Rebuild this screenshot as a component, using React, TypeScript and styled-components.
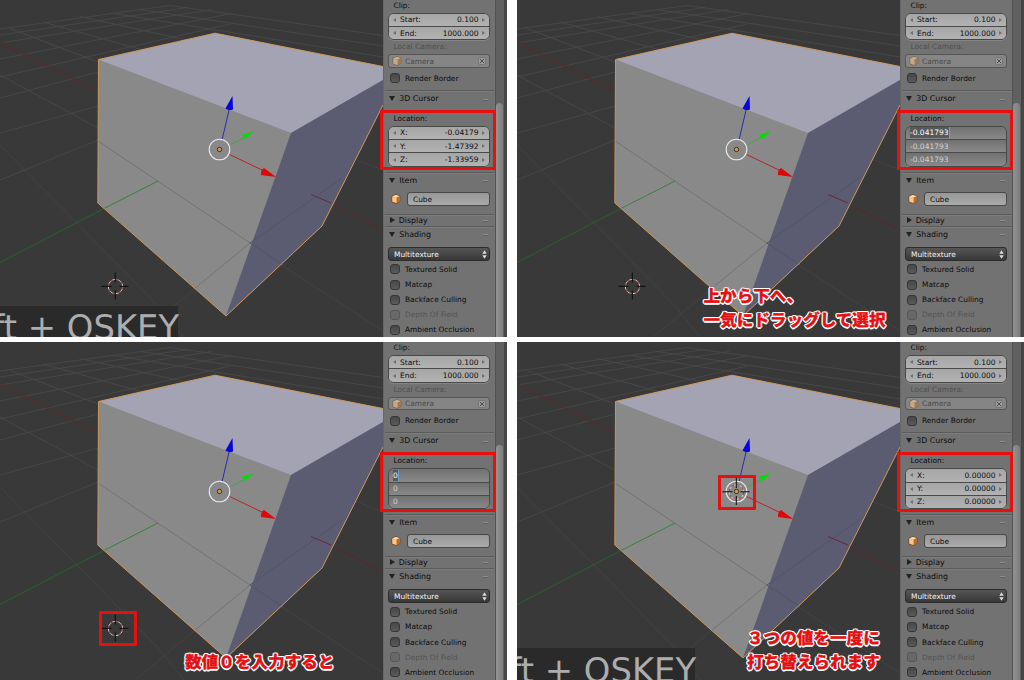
import React from "react";
import styled, { createGlobalStyle, css } from "styled-components";

const GlobalStyle = createGlobalStyle`
  * { box-sizing: border-box; }
  body { margin: 0; background: #fff; overflow: hidden; }
`;

const Sheet = styled.main`
  display: grid;
  grid-template-columns: 507px 507px;
  grid-template-rows: 337.4px 337.6px;
  gap: 5px 10px;
  width: 1024px;
  height: 680px;
  background: #fdfdfd;
  font-family: "DejaVu Sans", "Noto Sans CJK JP", sans-serif;
  text-rendering: geometricPrecision;
  color: #0c0c0c;
`;

const Panel = styled.section`
  position: relative;
  display: flex;
  overflow: hidden;
  background: #393939;
`;

const Scene = styled.svg`
  flex: none;
  width: 383px;
  height: 338px;
  display: block;
  background: #393939;
`;

const Sidebar = styled.aside`
  flex: none;
  width: 112px;
  height: 338px;
  background: #727272;
  box-shadow: inset 1px 0 0 #666;
  overflow: hidden;
`;

const ScrollTrack = styled.div`
  flex: none;
  width: 9px;
  height: 338px;
  padding: 103px 1px 0 0;
  background: #606060;
  border-left: 1px solid #525252;
`;

const ScrollThumb = styled.div`
  height: 260px;
  border-radius: 4px 4px 0 0;
  background: linear-gradient(90deg, #929292, #7e7e7e);
`;

const Edge = styled.div`
  flex: 1;
  background: #464646;
`;

const Label = styled.div<{ $height: number; $dim?: boolean }>`
  height: ${(p) => p.$height}px;
  line-height: ${(p) => p.$height}px;
  padding-left: 10.5px;
  font-size: 7.4px;
  color: ${(p) => (p.$dim ? "#505050" : "#0c0c0c")};
  white-space: nowrap;
`;

const Group = styled.div<{ $editing?: boolean }>`
  margin: 0 5px;
  width: 102px;
  border: 1px solid #484848;
  border-radius: 6px;
  overflow: hidden;
  background: ${(p) => (p.$editing ? "#7d7d7d" : "#adadad")};
  box-shadow: 0 1px 0 #858585;
`;

const NumberRow = styled.div<{ $editing?: boolean }>`
  display: flex;
  align-items: center;
  height: 12.6px;
  padding: 0 4px;
  font-size: 7.5px;
  color: ${(p) => (p.$editing ? "#d8d8d8" : "#0c0c0c")};
  background: ${(p) =>
    p.$editing
      ? "linear-gradient(#717171, #898989)"
      : "linear-gradient(#a6a6a6, #b2b2b2)"};
  & + & {
    border-top: 1px solid #4a4a4a;
    height: 13.3px;
  }
`;

const Arrow = styled.i<{ $flip?: boolean }>`
  width: 0;
  height: 0;
  border: 2px solid transparent;
  border-left-width: 0;
  border-right: 3px solid #707070;
  ${(p) => p.$flip && css`transform: scaleX(-1);`}
`;

const RowName = styled.span`
  margin-left: 4px;
`;

const RowValue = styled.span`
  margin: 0 3.5px 0 auto;
`;

const EditText = styled.span<{ $selected?: boolean }>`
  padding: 0;
  line-height: 11px;
  color: ${(p) => (p.$selected ? "#fff" : "#d2d2d2")};
  background: ${(p) => (p.$selected ? "#56595c" : "none")};
  border-right: 1px solid ${(p) => (p.$selected ? "#6a9fd0" : "transparent")};
`;

const CameraField = styled.div`
  display: flex;
  align-items: center;
  width: 102px;
  height: 13.5px;
  margin: 0 5px;
  padding: 0 3px;
  border: 1px solid #565656;
  border-radius: 3px;
  background: #858585;
  font-size: 7.4px;
  color: #4a4a4a;
  gap: 3px;
`;

const ClearIcon = styled.svg`
  margin-left: auto;
`;

const CheckRow = styled.div<{ $dim?: boolean }>`
  display: flex;
  align-items: center;
  height: 15.15px;
  padding-left: 7px;
  gap: 5px;
  font-size: 7.4px;
  white-space: nowrap;
  color: ${(p) => (p.$dim ? "#525252" : "#0c0c0c")};
`;

const Box = styled.span<{ $dim?: boolean }>`
  width: 10px;
  height: 10px;
  border-radius: 3px;
  border: 1px solid ${(p) => (p.$dim ? "#575757" : "#363636")};
  background: ${(p) =>
    p.$dim ? "#686868" : "linear-gradient(#474747, #5a5a5a)"};
`;

const Header = styled.div<{ $height: number }>`
  display: flex;
  align-items: center;
  height: ${(p) => p.$height}px;
  margin: 0 1px 0 2px;
  padding: 0 6px 0 4px;
  border-top: 1px solid #5b5b5b;
  box-shadow: inset 0 1px 0 #7c7c7c;
  font-size: 7.85px;
`;

const Twist = styled.i<{ $open?: boolean }>`
  width: 0;
  height: 0;
  margin-right: 4.2px;
  border: 3px solid transparent;
  ${(p) =>
    p.$open
      ? css`border-top: 5px solid #222; border-bottom: 0;`
      : css`border-left: 5px solid #222; border-right: 0; margin-left: 0.5px;`}
`;

const Grip = styled.span`
  width: 5px;
  height: 2px;
  margin: 2px 0 0 auto;
  background: #8e8e8e;
  border-bottom: 1px solid #5f5f5f;
`;

const ItemRow = styled.div`
  display: flex;
  align-items: center;
  justify-content: space-between;
  height: 14px;
  padding: 0 5px 0 7.5px;
  margin: 5px 0 7.5px;
`;

const NameField = styled.div`
  width: 83px;
  height: 14px;
  padding-left: 5px;
  border: 1px solid #484848;
  border-radius: 3px;
  background: linear-gradient(#979797, #ababab);
  font-size: 7.4px;
  line-height: 13px;
`;

const Dropdown = styled.div`
  display: flex;
  align-items: center;
  justify-content: space-between;
  width: 102px;
  height: 14px;
  margin: 5px 5px 1.3px;
  padding: 1px 2px 0 5px;
  border: 1px solid #2c2c2c;
  border-radius: 3px;
  background: linear-gradient(#565656, #373737);
  color: #f4f4f4;
  font-size: 7.4px;
`;

const Spacer = styled.div<{ $height: number }>`
  height: ${(p) => p.$height}px;
`;

const Marker = styled.div<{ $x: number; $y: number; $w: number; $h: number }>`
  position: absolute;
  left: ${(p) => p.$x}px;
  top: ${(p) => p.$y}px;
  width: ${(p) => p.$w}px;
  height: ${(p) => p.$h}px;
  border: 3px solid #e8100e;
  border-radius: 1px;
`;

const KeyOverlay = styled.div`
  position: absolute;
  left: 0;
  bottom: 0;
  width: 182px;
  height: 31.5px;
  overflow: hidden;
  background: linear-gradient(90deg, #2a2a2a 178px, transparent 178px);
`;

const KeyText = styled.div`
  margin-left: -7.5px;
  padding-top: 4.5px;
  font-size: 33.8px;
  line-height: 36px;
  color: #adadad;
  white-space: pre;
`;

const Caption = styled.div<{ $x: number; $y: number }>`
  position: absolute;
  left: ${(p) => p.$x}px;
  top: ${(p) => p.$y}px;
  font-family: "Noto Sans CJK JP", sans-serif;
  font-weight: 900;
  font-size: 16.6px;
  line-height: 24px;
  color: #e60f12;
  white-space: nowrap;
  -webkit-text-stroke: 0.3px #e60f12;
  text-shadow: 1.5px 0 0 #fff, -1.5px 0 0 #fff, 0 1.5px 0 #fff, 0 -1.5px 0 #fff,
    1px 1px 0 #fff, -1px 1px 0 #fff, 1px -1px 0 #fff, -1px -1px 0 #fff;
`;

function CubeIcon({ faded }: { faded?: boolean }) {
  return (
    <svg width="10" height="10" viewBox="0 0 10 10" opacity={faded ? 0.55 : 1}>
      <path d="M.8 2.300 4.500.7 9 2 8.900 7.400 5.300 9.400 1.100 8Z" fill="#e9a45a" stroke="#5d3512" strokeWidth=".7" />
      <path d="M1.200 2.400 4.600 1 8.600 2.100 5.600 3.500Z" fill="#fbdcae" />
      <path d="M5.700 3.500 8.700 2.200 8.500 7.200 5.500 9Z" fill="#b86e29" />
      <path d="M1.300 2.900 5.300 3.800V8.800L1.500 7.700Z" fill="#f8c88c" />
    </svg>
  );
}

function Cursor3D({ x, y }: { x: number; y: number }) {
  return (
    <g transform={`translate(${x} ${y})`} fill="none">
      <circle r="7.2" stroke="#dccaca" strokeWidth="1" />
      <circle r="7.2" stroke="#a04040" strokeWidth="1.1" strokeDasharray="2.830 2.830" />
      <path d="M-14-.2H-4M4-.2H13M-.2-14V-4M-.2 4V13" stroke="#0b0b0b" strokeWidth="1" />
    </g>
  );
}

function Viewport({ centered }: { centered?: boolean }) {
  return (
    <Scene viewBox="0 0 383 338">
      <g fill="none" stroke="#484848" strokeWidth=".9">
        <path d="M0 29 170 5.500M0 35 188 7.500M0 43 212 9.500M0 59 232 13.500M0 77 230 24M0 98 98 72M0 133 98 106M0 180 98 140" />
        <path d="M170 5.500 383 35.500M140 9.500 383 46M114 13.500 383 57M80 16.500 200 43M43 22 150 52M10 28.500 98 62M0 75 98 128" />
        <path d="M0 145 77 223 157 305 184 338M135 338 194 289M280 264 383 331M352 158 383 170" stroke="#444" />
      </g>
      <path d="M0 42 98 91" stroke="#522f2f" strokeWidth="2.500" opacity=".6" />
      <path d="M330 203 383 230" stroke="#5c2828" strokeWidth="1" />
      <path d="M98.500 59.500 215 33.200 383 66.500V105L322 226 226 316 97.800 203Z" fill="#898989" />
      <path d="M98.500 59.500 215 33.200 383 66.500V80L291 133Z" fill="#a4a3b3" />
      <path d="M291 133 383 80V105L322 226 226 316Z" fill="#5b5c72" />
      <path d="M98 141 250 243M194 289 250 243" stroke="#737373" fill="none" />
      <path d="M250 243 283 265M250 243 342 178" stroke="#525367" fill="none" />
      <path d="M311 194.500 331 203" stroke="#6a2838" />
      <path d="M0 262.500 104 208.500" stroke="#27612c" />
      <path d="M104 208.500 158 181" stroke="#35833b" />
      <path d="M383 66.500 215 33.200 98.500 59.500 97.800 203 226 316 322 226 383 105" fill="none" stroke="#cb9656" strokeWidth="1" />
      <path d="M222 140 230 106" stroke="#2b2bb0" />
      <path d="M232.500 96 225.500 108.500Q229 111 233 109.500Z" fill="#0505df" />
      <path d="M231 144.500 244 137.500" stroke="#3aac3a" />
      <path d="M253.500 131.500 242 134.500 245 139.500Z" fill="#08d808" />
      <path d="M229.500 154.500 264 171" stroke="#b72328" />
      <path d="M276 177 264 168Q260.500 170 261 175Z" fill="#df0808" />
      <circle cx="219.500" cy="149.500" r="10.300" fill="none" stroke="#e8e8e8" strokeWidth="1.100" />
      <Cursor3D x={centered ? 219.5 : 115.5} y={centered ? 150 : 286.5} />
      <circle cx="219.500" cy="149.500" r="2.200" fill="#ce9857" stroke="#382612" strokeWidth=".9" />
    </Scene>
  );
}

type Row = { name: string; value: string };

function Numbers({ rows }: { rows: Row[] }) {
  return (
    <Group>
      {rows.map((r) => (
        <NumberRow key={r.name}>
          <Arrow />
          <RowName>{r.name}:</RowName>
          <RowValue>{r.value}</RowValue>
          <Arrow $flip />
        </NumberRow>
      ))}
    </Group>
  );
}

function EditNumbers({ value }: { value: string }) {
  return (
    <Group $editing>
      {[0, 1, 2].map((i) => (
        <NumberRow key={i} $editing>
          <EditText $selected={i === 0}>{value}</EditText>
        </NumberRow>
      ))}
    </Group>
  );
}

function Check({ text, dim }: { text: string; dim?: boolean }) {
  return (
    <CheckRow $dim={dim}>
      <Box $dim={dim} />
      {text}
    </CheckRow>
  );
}

function Title({ text, open, height }: { text: string; open?: boolean; height: number }) {
  return (
    <Header $height={height}>
      <Twist $open={open} />
      {text}
      <Grip />
    </Header>
  );
}

function Properties({ location }: { location: React.ReactNode }) {
  return (
    <>
      <Sidebar>
        <Label $height={12.5}>Clip:</Label>
        <Numbers rows={[{ name: "Start", value: "0.100" }, { name: "End", value: "1000.000" }]} />
        <Label $height={14} $dim>Local Camera:</Label>
        <CameraField>
          <CubeIcon faded />
          Camera
          <ClearIcon width="8" height="8" viewBox="0 0 8 8">
            <rect x=".5" y=".5" width="7" height="7" rx="1.500" fill="#9b9b9b" stroke="#666" strokeWidth=".6" />
            <path d="M2 2 6 6M6 2 2 6" stroke="#4c4c4c" />
          </ClearIcon>
        </CameraField>
        <Spacer $height={3} />
        <Check text="Render Border" />
        <Spacer $height={4} />
        <Title text="3D Cursor" open height={16} />
        <Spacer $height={5.5} />
        <Label $height={14}>Location:</Label>
        {location}
        <Spacer $height={5.3} />
        <Title text="Item" open height={15} />
        <ItemRow>
          <CubeIcon />
          <NameField>Cube</NameField>
        </ItemRow>
        <Title text="Display" height={12} />
        <Title text="Shading" open height={16} />
        <Dropdown>
          Multitexture
          <svg width="5" height="9" viewBox="0 0 5 9">
            <path d="M.3 3.700 2.500.3 4.700 3.700ZM.3 5.300 2.500 8.700 4.700 5.300Z" fill="#ddd" />
          </svg>
        </Dropdown>
        <Check text="Textured Solid" />
        <Check text="Matcap" />
        <Check text="Backface Culling" />
        <Check text="Depth Of Field" dim />
        <Check text="Ambient Occlusion" />
      </Sidebar>
      <ScrollTrack>
        <ScrollThumb />
      </ScrollTrack>
      <Edge />
    </>
  );
}

function Keys() {
  return (
    <KeyOverlay>
      <KeyText>ft + OSKEY</KeyText>
    </KeyOverlay>
  );
}

const initial: Row[] = [
  { name: "X", value: "-0.04179" },
  { name: "Y", value: "-1.47392" },
  { name: "Z", value: "-1.33959" },
];
const zeroed: Row[] = initial.map((r) => ({ name: r.name, value: "0.00000" }));

const LocationMarker = () => <Marker $x={380} $y={110} $w={116} $h={60} />;

export default function App() {
  return (
    <>
      <GlobalStyle />
      <Sheet>
        <Panel>
          <Viewport />
          <Properties location={<Numbers rows={initial} />} />
          <LocationMarker />
          <Keys />
        </Panel>
        <Panel>
          <Viewport />
          <Properties location={<EditNumbers value="-0.041793" />} />
          <LocationMarker />
          <Caption $x={186.5} $y={282.6}>
            上から下へ、
            <br />
            一気にドラッグして選択
          </Caption>
        </Panel>
        <Panel>
          <Viewport />
          <Properties location={<EditNumbers value="0" />} />
          <LocationMarker />
          <Marker $x={98.5} $y={269} $w={38} $h={35} />
          <Caption $x={185} $y={306.5}>数値０を入力すると</Caption>
        </Panel>
        <Panel>
          <Viewport centered />
          <Properties location={<Numbers rows={zeroed} />} />
          <LocationMarker />
          <Marker $x={201} $y={133} $w={38} $h={35} />
          <Keys />
          <Caption $x={230} $y={282.5}>
            ３つの値を一度に
            <br />
            打ち替えられます
          </Caption>
        </Panel>
      </Sheet>
    </>
  );
}
